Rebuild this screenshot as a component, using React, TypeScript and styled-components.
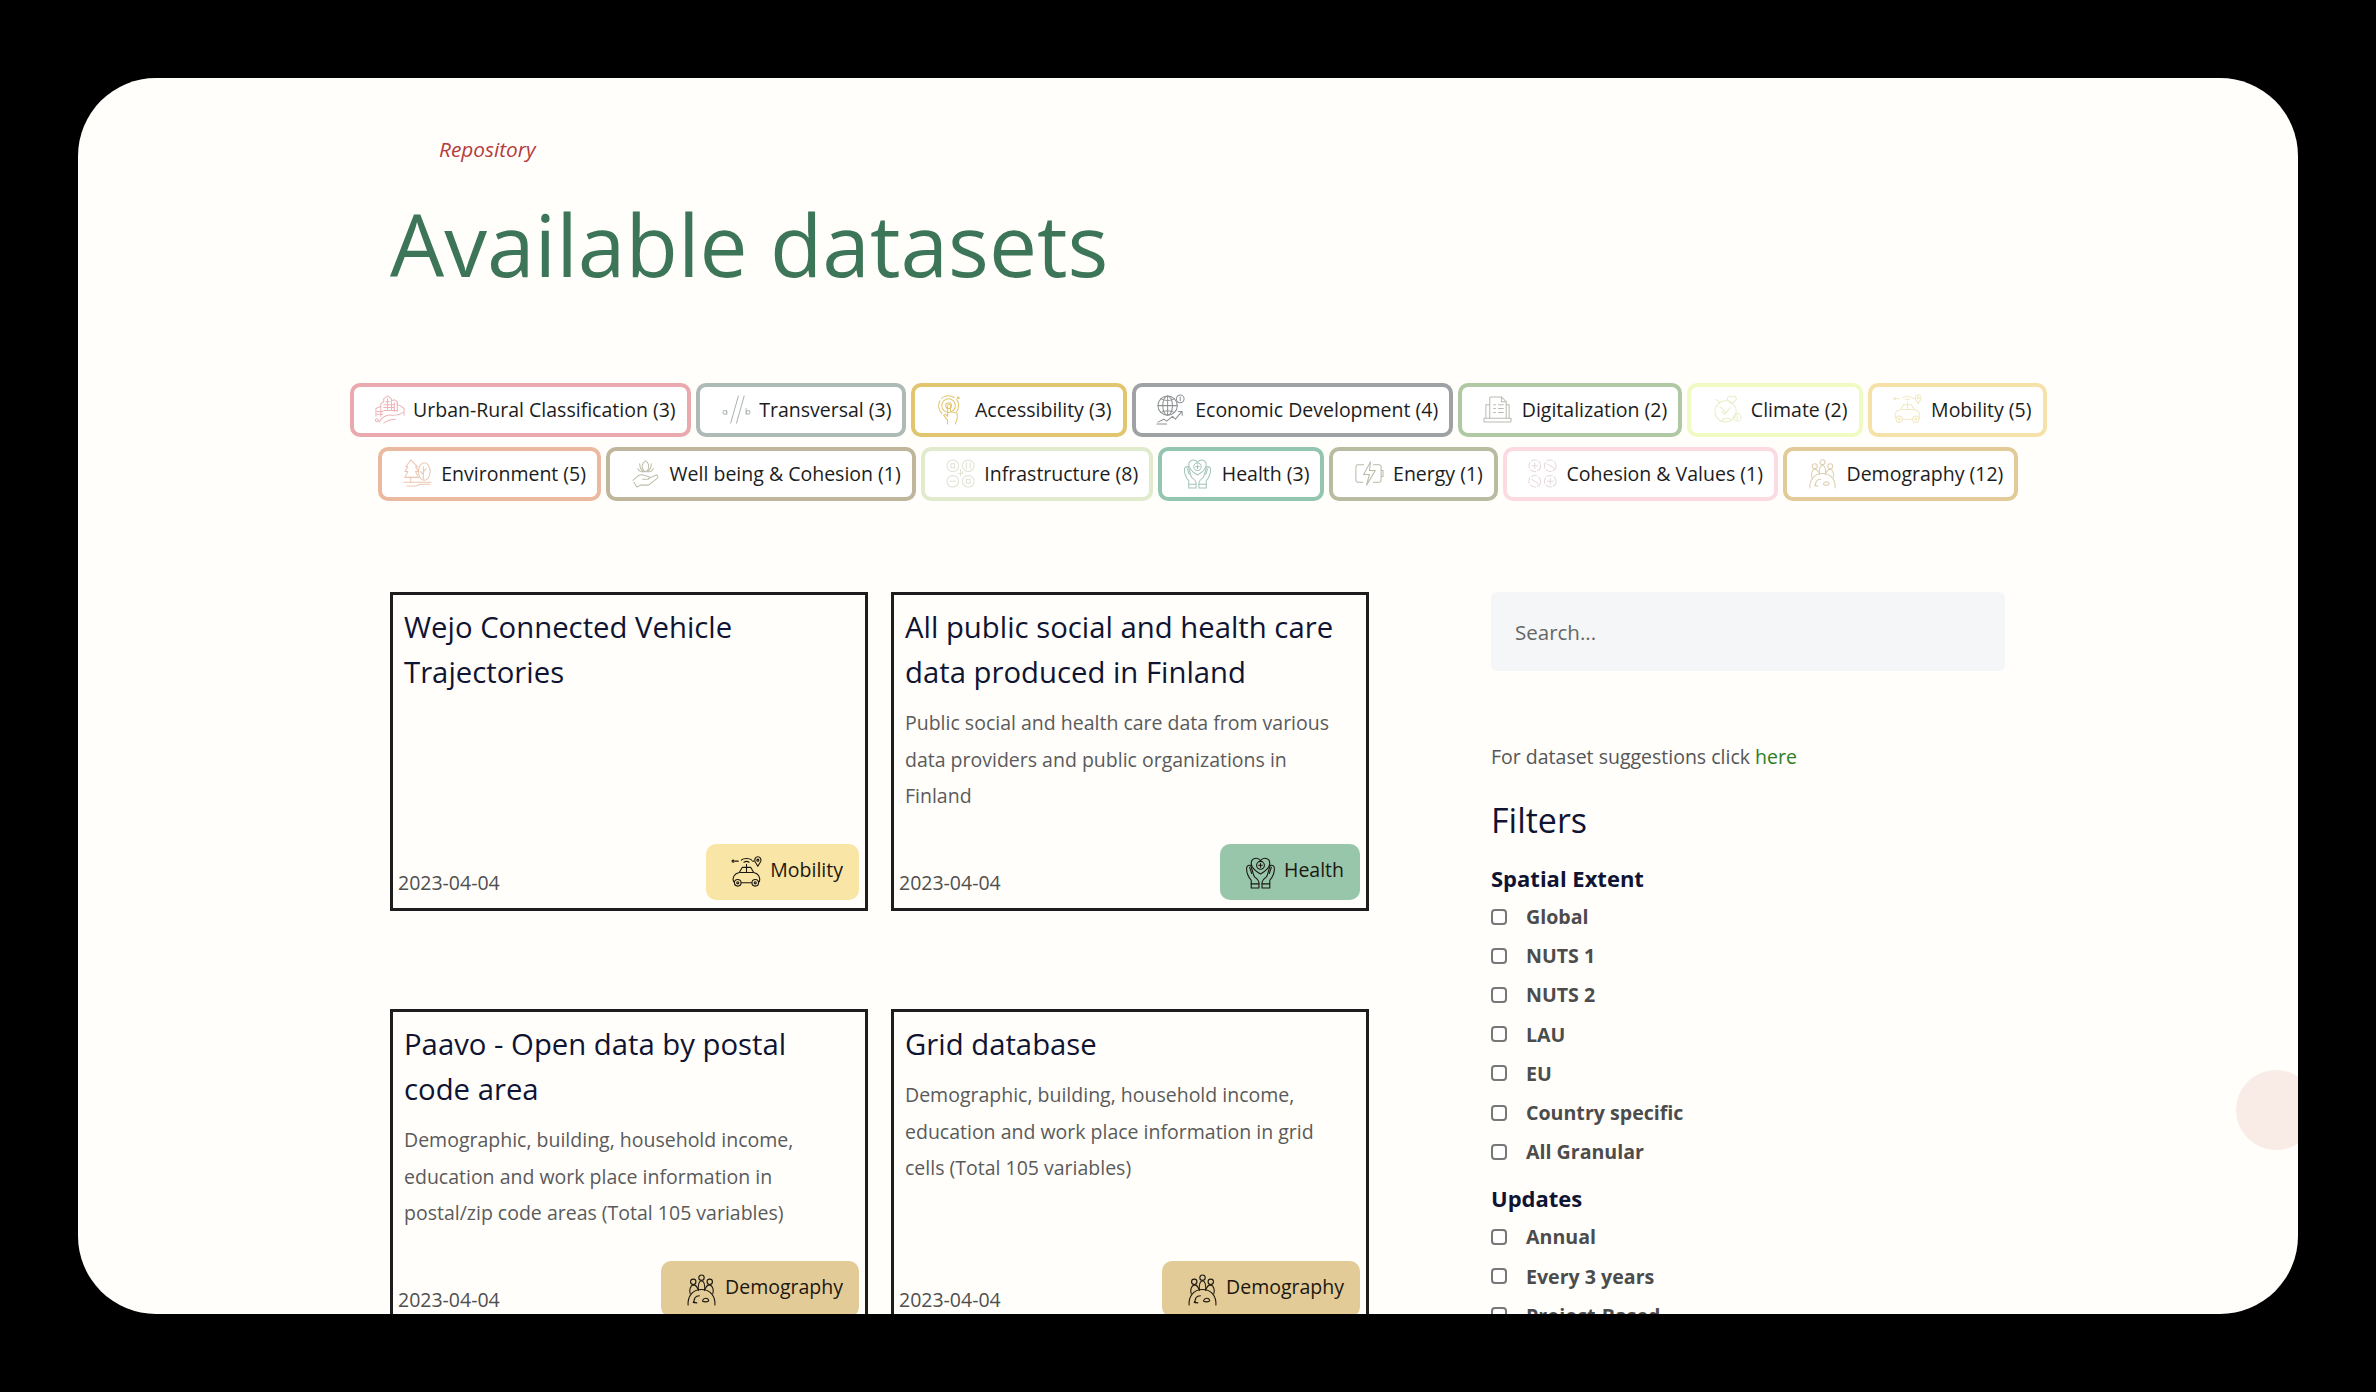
import React from "react";
import styled, { createGlobalStyle } from "styled-components";

const GlobalStyle = createGlobalStyle`
  html, body {
    margin: 0;
    padding: 0;
    background: #000;
    font-family: "Open Sans", "Noto Sans", sans-serif;
  }
  * { box-sizing: border-box; }
`;

const Backdrop = styled.div`
  width: 2376px;
  height: 1392px;
  padding: 78px;
  background: #000;
  overflow: hidden;
`;

const Screen = styled.main`
  position: relative;
  height: 1236px;
  background: #fffefa;
  border-radius: 78px;
  overflow: hidden;
  padding: 58px 270px 0 270px;
`;

const Header = styled.header`
  margin-left: 42px;
`;

const Eyebrow = styled.div`
  font-size: 20.8px;
  line-height: 27px;
  font-style: italic;
  color: #b53a3e;
  margin-left: 49px;
`;

const Title = styled.h1`
  margin: 25px 0 0 0;
  font-size: 85.7px;
  line-height: 112px;
  font-weight: 400;
  color: #3d7558;
`;

const ChipCloud = styled.nav`
  margin: 83px -2px 0 18px;
  display: flex;
  flex-wrap: wrap;
  justify-content: center;
`;

const ChipRow = styled.div`
  flex: 0 0 100%;
  display: flex;
  justify-content: center;
  gap: 5px;
  margin-bottom: 10px;
`;

const Chip = styled.button<{ $edge: string }>`
  display: flex;
  align-items: center;
  height: 54px;
  padding: 0 11px 2px 20px;
  gap: 8.6px;
  background: #fff;
  border: 4px solid ${({ $edge }) => $edge};
  border-radius: 10px;
  font: 400 19.5px/27px "Open Sans", sans-serif;
  color: #1c1c1c;
  white-space: nowrap;
`;

const Columns = styled.div`
  display: flex;
  margin-top: 81px;
  margin-left: 42px;
`;

const CardGrid = styled.section`
  display: grid;
  grid-template-columns: 478px 478px;
  column-gap: 23px;
  row-gap: 92px;
  width: 979px;
  flex: none;
`;

const Card = styled.article`
  position: relative;
  height: 319px;
  border: 3px solid #1d1d1d;
  padding: 10px 11px 0 11px;
`;

const CardTitle = styled.h3`
  margin: 0;
  font-size: 29.3px;
  line-height: 45px;
  font-weight: 400;
  color: #101433;
`;

const CardText = styled.p`
  margin: 10px 0 0 0;
  font-size: 19.5px;
  line-height: 36.5px;
  color: #5a5a5a;
`;

const CardDate = styled.time`
  position: absolute;
  left: 5px;
  bottom: 12px;
  font-size: 19.5px;
  line-height: 27px;
  color: #4f4f4f;
`;

const Badge = styled.span<{ $fill: string }>`
  position: absolute;
  right: 6px;
  bottom: 8px;
  height: 56px;
  display: flex;
  align-items: center;
  gap: 7px;
  padding: 0 16px 0 24px;
  border-radius: 10px;
  background: ${({ $fill }) => $fill};
  font-size: 19.5px;
  color: #1b1710;
`;

const BadgeLabel = styled.span`
  margin-bottom: 5px;
`;

const Sidebar = styled.aside`
  margin-left: 122px;
  width: 514px;
`;

const SearchBox = styled.input`
  display: block;
  width: 514px;
  height: 79px;
  border: none;
  border-radius: 6px;
  background: #f5f6f7;
  padding: 0 24px;
  font: 400 20.5px "Open Sans", sans-serif;
  color: #555;
  &::placeholder { color: #666; opacity: 1; }
`;

const Suggest = styled.p`
  margin: 72px 0 0 0;
  font-size: 19.5px;
  line-height: 27px;
  color: #555;
  a { color: #2f7d1f; text-decoration: none; }
`;

const FiltersHead = styled.h2`
  margin: 28px 0 0 0;
  font-size: 34px;
  line-height: 45px;
  font-weight: 400;
  color: #101433;
`;

const GroupHead = styled.h4`
  margin: 0 0 4px 0;
  font-size: 22px;
  line-height: 30px;
  font-weight: 700;
  color: #101433;
`;

const FilterGroup = styled.div<{ $gapTop: number }>`
  margin-top: ${({ $gapTop }) => $gapTop}px;
`;

const FilterRow = styled.label`
  display: flex;
  align-items: center;
  height: 39.2px;
  font-size: 19.6px;
  font-weight: 700;
  color: #4c4c4c;
`;

const Tick = styled.input`
  appearance: none;
  width: 16px;
  height: 16px;
  margin: 0 19px 0 0;
  border: 2px solid #777;
  border-radius: 4px;
  background: #fff;
`;

const FloatBlob = styled.div`
  position: absolute;
  right: -18px;
  top: 992px;
  width: 80px;
  height: 80px;
  border-radius: 50%;
  background: #f9ebe5;
`;

const Glyph = styled.svg<{ $size: number }>`
  width: ${({ $size }) => $size}px;
  height: ${({ $size }) => $size}px;
  flex: none;
  fill: none;
  stroke: currentColor;
  stroke-width: 1.05;
  stroke-linecap: round;
  stroke-linejoin: round;
`;

const TintedIcon = styled.span<{ $tint: string }>`
  display: flex;
  color: ${({ $tint }) => $tint};
`;

const drawings: Record<string, React.ReactNode> = {
  urban: (
    <>
      <path d="M2 23v-8l5-2v-3l3-2V5l4-3 4 3v2l3-1 3 2v3l3 1 4 3v7" />
      <path d="M7 13v10M14 5v11M18 7v9M24 9v9M10 11h11M10 14h11M10 17h14M3 18h6M3 21h6M12 8h4M21 9v9" />
      <path d="M5 29c5-7 10-8 14-7 4 0 7 0 11-3M10 30c4-3 8-4 12-4" />
      <circle cx="3" cy="27" r="1.500" />
    </>
  ),
  transversal: (
    <>
      <path d="M11 30 19 2M17 30 25 2" />
      <circle cx="5" cy="19" r="2" />
      <path d="M7 17v4M27 15v6" />
      <circle cx="29" cy="19" r="2" />
    </>
  ),
  access: (
    <>
      <path d="M7 20C2 15 3 6 9 3c6-3 13 0 15 6 1 4 0 7-2 10" strokeDasharray="14 3" />
      <circle cx="14" cy="12" r="7" />
      <circle cx="14" cy="12" r="3" />
      <path d="M13 31v-4l-4-5 2-1 2 2V12a1.500 1.500 0 0 1 3 0v6l7 2v5l-2 6" />
      <circle cx="24" cy="4" r="1" />
    </>
  ),
  economy: (
    <>
      <circle cx="12" cy="12" r="10" />
      <path d="M2 12h20M12 2v20M5 5c4 2 10 2 14 0M5 19c4-2 10-2 14 0" />
      <ellipse cx="12" cy="12" rx="5" ry="10" />
      <circle cx="25" cy="5" r="4" />
      <path d="M25 3v4M2 29l6-3 3 2 6-5 3 3 6-7M23 18l4 0 0 4M1 31h10" />
    </>
  ),
  digital: (
    <>
      <path d="M8 25V4a1 1 0 0 1 1-1h11l5 5v17" />
      <path d="M20 3v5h5M12 11h2M17 11h5M12 15h2M17 15h5M12 19h2M17 19h5" />
      <path d="M8 11H4v14M25 11h3v14M2 25h28v3a1 1 0 0 1-1 1H3a1 1 0 0 1-1-1z" />
    </>
  ),
  climate: (
    <>
      <circle cx="15" cy="18" r="11" />
      <path d="M9 13c3 3 5 3 6 7M11 28c2-3 6-4 9-2M11 18l3 3 6-7" />
      <path d="M21 3c-2-2-5 0-4 3 1 2 3 3 4 4 1-1 4-2 5-4 1-3-3-5-5-3z" />
      <circle cx="27" cy="24" r="4" />
      <path d="M5 6c2 0 4 2 4 4M27 22v4" />
    </>
  ),
  mobility: (
    <>
      <path d="M3.500 25c-1.500-4 .5-8 5.500-9l3-5h8l3 5c5 1 6.500 5 5.500 9h-1" />
      <path d="M11 26h10M10 16h12.500M16 11v5M16 11V8" />
      <circle cx="7.500" cy="26" r="3.200" />
      <circle cx="24.500" cy="26" r="3.200" />
      <circle cx="7.500" cy="26" r="1" />
      <circle cx="24.500" cy="26" r="1" />
      <circle cx="3" cy="5" r="1" />
      <path d="M5 5h3M11 4c2-2 8-2 10 0M13.500 6c1.500-1 3.500-1 5 0M22 5h1" />
      <path d="M27 .8c-2.500 0-3.500 2.500-2.800 4.500L27 10l2.800-4.700c.7-2-.3-4.500-2.800-4.500z" />
      <circle cx="27" cy="4" r="1" />
    </>
  ),
  environment: (
    <>
      <path d="M9 2 4 9h2l-3 5h3l-3 6h14l-3-6h3l-3-5h2z" />
      <path d="M9 20v5M22 22V9M22 14l3-3M22 17l-3-3" />
      <ellipse cx="23" cy="14" rx="6" ry="9" />
      <path d="M2 25h28M5 29h9c2 0 3-2 5-2h10" />
    </>
  ),
  wellbeing: (
    <>
      <path d="M16 3c3 2 4 5 3 8-1 2-2 3-3 3s-2-1-3-3c-1-3 0-6 3-8z" />
      <path d="M10 6c0 3 1 6 4 8M22 6c0 3-1 6-4 8M8 11c1 2 3 4 8 3 5 1 7-1 8-3" />
      <path d="M3 23l6-5c2-1 4-1 6 0l4 1c2 1 1 3-1 3h-5M19 21l7-3c2-1 4 1 2 3l-9 7h-8l-4 2-3-5" />
    </>
  ),
  infra: (
    <>
      <circle cx="8" cy="8" r="6" />
      <circle cx="24" cy="8" r="6" />
      <circle cx="8" cy="24" r="6" />
      <circle cx="24" cy="24" r="6" />
      <path d="M6 6h4v4H6zM22 5v6M26 5v6M5 24h6M22 22h4v4h-4zM14 16h4v-2M16 12v4M16 16v2" />
    </>
  ),
  health: (
    <>
      <path d="M16 17.500c-6-3.500-9-6.500-9-10.500 0-5 6-6.500 9-2.500 3-4 9-2.500 9 2.500 0 4-3 7-9 10.500z" />
      <circle cx="16" cy="9" r="3.800" />
      <path d="M14.200 9h3.600M16 7.200v3.600" />
      <path d="M14.500 31v-5c0-2.500-2-4-4-5.500-1.500-1.500-1.500-3-2-5L6.500 9C4 8.500 2.500 10 2.500 12c0 4 1.500 8 4.500 11.500V31z" />
      <path d="M17.500 31v-5c0-2.500 2-4 4-5.500 1.500-1.500 1.500-3 2-5L25.500 9c2.500-.5 4 1 4 3 0 4-1.500 8-4.500 11.500V31z" />
      <path d="M7 27h7.500M17.500 27H25M5.500 11l2 6M26.500 11l-2 6" />
    </>
  ),
  energy: (
    <>
      <path d="M11 7H5a2 2 0 0 0-2 2v14a2 2 0 0 0 2 2h5M21 7h6a2 2 0 0 1 2 2v14a2 2 0 0 1-2 2h-6M29 13h2v6h-2" />
      <path d="M18 4 11 17h6l-3 11 9-15h-6z" />
    </>
  ),
  cohesion: (
    <>
      <circle cx="8" cy="8" r="6" strokeDasharray="6 2" />
      <circle cx="24" cy="8" r="6" strokeDasharray="6 2" />
      <circle cx="8" cy="24" r="6" strokeDasharray="6 2" />
      <circle cx="24" cy="24" r="6" strokeDasharray="6 2" />
      <path d="M5 8h6M8 5v6M21 6l6 4M21 24h6M24 21v6M5 22l6 4" />
    </>
  ),
  demography: (
    <>
      <circle cx="16" cy="4.500" r="2.600" />
      <circle cx="8" cy="8.500" r="2.600" />
      <circle cx="24" cy="8.500" r="2.600" />
      <path d="M13 17c-.5-5 .5-9 3-9.500 2.500.5 3.500 4.500 3 9.500" />
      <path d="M5 20c-1-3 0-8 3-8.500 2 0 3.500 1.500 4.500 4M27 20c1-3 0-8-3-8.500-2 0-3.500 1.500-4.500 4" />
      <path d="M3 31c-.5-8 4-15 13-15s13.500 7 13 15" />
      <path d="M9 29c-1-4 1-7 5-7M9.500 25 8 28.500l3.500.5" />
      <path d="M17 27c.5-3 5-3.500 6-.5 0 1-1 1.500-3 1.500s-3 0-3-1z" />
    </>
  ),
};

const CategoryIcon = ({ name, size = 31 }: { name: string; size?: number }) => (
  <Glyph $size={size} viewBox="0 0 32 32" aria-hidden="true">
    {drawings[name]}
  </Glyph>
);

type ChipData = { label: string; icon: string; edge: string; tint: string };

const chipRows: ChipData[][] = [
  [
    { label: "Urban-Rural Classification (3)", icon: "urban", edge: "#eaa9ae", tint: "#eeb3b8" },
    { label: "Transversal (3)", icon: "transversal", edge: "#adbab6", tint: "#adb5b2" },
    { label: "Accessibility (3)", icon: "access", edge: "#e2c56f", tint: "#e2c56f" },
    { label: "Economic Development (4)", icon: "economy", edge: "#9fa2a4", tint: "#8e9294" },
    { label: "Digitalization (2)", icon: "digital", edge: "#afc9a5", tint: "#b9bcb4" },
    { label: "Climate (2)", icon: "climate", edge: "#f0fbc4", tint: "#e9efc8" },
    { label: "Mobility (5)", icon: "mobility", edge: "#f6e2a9", tint: "#f2e7c0" },
  ],
  [
    { label: "Environment (5)", icon: "environment", edge: "#ebb99f", tint: "#ecc5b1" },
    { label: "Well being & Cohesion (1)", icon: "wellbeing", edge: "#bfb69c", tint: "#bdbcaa" },
    { label: "Infrastructure (8)", icon: "infra", edge: "#e0eacd", tint: "#dfe3d5" },
    { label: "Health (3)", icon: "health", edge: "#93c5b1", tint: "#a3c4b8" },
    { label: "Energy (1)", icon: "energy", edge: "#babca1", tint: "#b8baa8" },
    { label: "Cohesion & Values (1)", icon: "cohesion", edge: "#fbdbe1", tint: "#e6d9dc" },
    { label: "Demography (12)", icon: "demography", edge: "#e2ca99", tint: "#dcd0b0" },
  ],
];

type CardData = {
  title: string;
  text?: string;
  badge: string;
  icon: string;
  fill: string;
};

const DEMOGRAPHY_FILL = "#e2cb96";

const cards: CardData[] = [
  { title: "Wejo Connected Vehicle Trajectories", badge: "Mobility", icon: "mobility", fill: "#f9e5a6" },
  {
    title: "All public social and health care data produced in Finland",
    text: "Public social and health care data from various data providers and public organizations in Finland",
    badge: "Health",
    icon: "health",
    fill: "#98c6ab",
  },
  {
    title: "Paavo - Open data by postal code area",
    text: "Demographic, building, household income, education and work place information in postal/zip code areas (Total 105 variables)",
    badge: "Demography",
    icon: "demography",
    fill: DEMOGRAPHY_FILL,
  },
  {
    title: "Grid database",
    text: "Demographic, building, household income, education and work place information in grid cells (Total 105 variables)",
    badge: "Demography",
    icon: "demography",
    fill: DEMOGRAPHY_FILL,
  },
];

const spatial = ["Global", "NUTS 1", "NUTS 2", "LAU", "EU", "Country specific", "All Granular"];
const updates = ["Annual", "Every 3 years", "Project-Based"];

export default function App() {
  return (
    <Backdrop>
      <GlobalStyle />
      <Screen>
        <Header>
          <Eyebrow>Repository</Eyebrow>
          <Title>Available datasets</Title>
        </Header>

        <ChipCloud>
          {chipRows.map((row, i) => (
            <ChipRow key={i}>
              {row.map((chip) => (
                <Chip key={chip.label} $edge={chip.edge}>
                  <TintedIcon $tint={chip.tint}>
                    <CategoryIcon name={chip.icon} />
                  </TintedIcon>
                  {chip.label}
                </Chip>
              ))}
            </ChipRow>
          ))}
        </ChipCloud>

        <Columns>
          <CardGrid>
            {cards.map((card) => (
              <Card key={card.title}>
                <CardTitle>{card.title}</CardTitle>
                {card.text && <CardText>{card.text}</CardText>}
                <CardDate>2023-04-04</CardDate>
                <Badge $fill={card.fill}>
                  <CategoryIcon name={card.icon} size={33} />
                  <BadgeLabel>{card.badge}</BadgeLabel>
                </Badge>
              </Card>
            ))}
          </CardGrid>

          <Sidebar>
            <SearchBox placeholder="Search..." />
            <Suggest>
              For dataset suggestions click <a href="#here">here</a>
            </Suggest>
            <FiltersHead>Filters</FiltersHead>
            <FilterGroup $gapTop={20}>
              <GroupHead>Spatial Extent</GroupHead>
              {spatial.map((item) => (
                <FilterRow key={item}>
                  <Tick type="checkbox" />
                  {item}
                </FilterRow>
              ))}
            </FilterGroup>
            <FilterGroup $gapTop={12}>
              <GroupHead>Updates</GroupHead>
              {updates.map((item) => (
                <FilterRow key={item}>
                  <Tick type="checkbox" />
                  {item}
                </FilterRow>
              ))}
            </FilterGroup>
          </Sidebar>
        </Columns>
        <FloatBlob />
      </Screen>
    </Backdrop>
  );
}
